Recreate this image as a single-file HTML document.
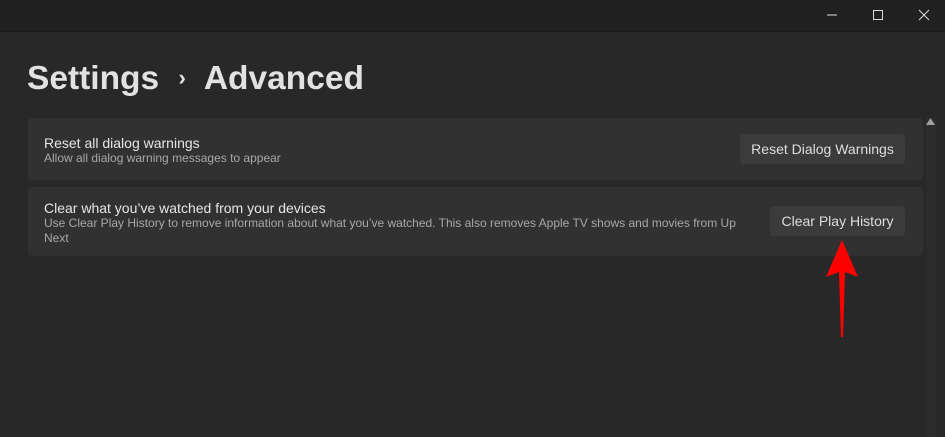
<!DOCTYPE html>
<html><head><style>
html,body{margin:0;padding:0;width:945px;height:437px;overflow:hidden;background:#282828;font-family:"Liberation Sans",sans-serif;}
.tb{position:absolute;left:0;top:0;width:945px;height:31px;background:#202020;border-bottom:1px solid #1b1b1b}
.h1{position:absolute;left:27px;top:60px;font-size:33.5px;font-weight:bold;color:#e2e2e2;letter-spacing:0px}
.card{position:absolute;left:28px;width:895px;background:#313131;border-radius:4px}
.t{position:absolute;left:16px;font-size:14px;color:#e6e6e6}
.s{position:absolute;left:16px;font-size:12px;color:#a8a8a8;line-height:15px;width:695px}
.btn{position:absolute;background:#3b3b3b;border-radius:4px;color:#dedede;font-size:14px;text-align:center;line-height:30px;height:30px}
</style></head><body>
<div class="tb"></div>
<svg style="position:absolute;left:0;top:0" width="945" height="31">
<line x1="827" y1="15" x2="837" y2="15" stroke="#ddd" stroke-width="1"/>
<rect x="873.5" y="10.5" width="9" height="9" fill="none" stroke="#ddd" stroke-width="1"/>
<path d="M919 10L929 20M929 10L919 20" stroke="#ddd" stroke-width="1"/>
</svg>
<div class="h1">Settings <span style="font-size:22px;position:relative;top:-4px;margin:0 10px">›</span> Advanced</div>
<div class="card" style="top:118px;height:62px">
<div class="t" style="top:17px">Reset all dialog warnings</div>
<div class="s" style="top:33px">Allow all dialog warning messages to appear</div>
<div class="btn" style="left:712px;top:16px;width:165px">Reset Dialog Warnings</div>
</div>
<div class="card" style="top:187px;height:69px">
<div class="t" style="top:13px">Clear what you’ve watched from your devices</div>
<div class="s" style="top:29px">Use Clear Play History to remove information about what you’ve watched. This also removes Apple TV shows and movies from Up Next</div>
<div class="btn" style="left:742px;top:19px;width:135px">Clear Play History</div>
</div>
<div style="position:absolute;left:926px;top:118px;width:10px;height:319px;background:#2c2c2c"></div>
<svg style="position:absolute;left:0;top:0" width="945" height="437">
<path d="M926 125L930.5 118L935 125Z" fill="#a0a0a0"/>
<path d="M842 240L858 277L845 272L843 337L841 337L839 272L826 277Z" fill="#ff0000"/>
</svg>
</body></html>
